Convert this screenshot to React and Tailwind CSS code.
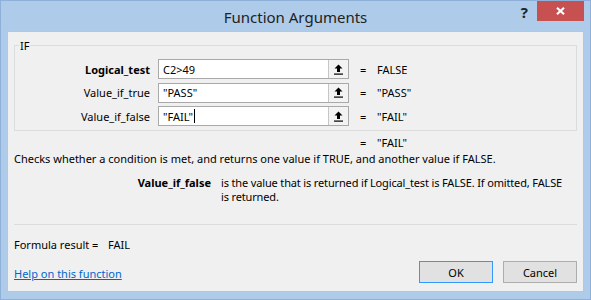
import React from 'react'

const RefButton = () => (
    <div className="w-[20px] h-full border-l border-[#c6c6c6] bg-[#f3f3f3] flex items-center justify-center">
        <svg width="11" height="11" viewBox="0 0 11 11">
            <path d="M5.5 0.5 L9.5 4.5 L7 4.5 L7 8 L4 8 L4 4.5 L1.5 4.5 Z" fill="#000" />
            <rect x="1" y="9.5" width="9" height="1.2" fill="#000" />
        </svg>
    </div>
)

const ArgRow = ({ label, value, result, bold, cursor }) => (
    <div className="flex items-center h-[20px]">
        <div className={`w-[135px] text-right text-black ${bold ? 'font-bold' : ''}`}>{label}</div>
        <div className="ml-[8px] w-[191px] h-[20px] flex border border-[#a9a9a9] bg-white">
            <div className="flex-1 flex items-center pl-[4px] text-black">
                {value}
                {cursor && <span className="inline-block w-[1px] h-[14px] bg-black ml-[1px]"></span>}
            </div>
            <RefButton />
        </div>
        <div className="ml-[11px] w-[17px] text-black">=</div>
        <div className="text-black">{result}</div>
    </div>
)

const App = () => {
    return (
        <div className="w-[591px] h-[300px] bg-[#aecbe9] border border-[#8fb0d8] flex flex-col text-[11px] leading-[15px]" style={{ fontFamily: '"Noto Sans", "Open Sans", sans-serif' }}>
            {/* title bar */}
            <div className="h-[30px] grid grid-cols-[1fr_auto_1fr]">
                <div></div>
                <div className="pt-[6px] text-[15px] leading-[20px] text-[#222]">Function Arguments</div>
                <div className="flex justify-end items-start pr-[6px]">
                    <div className="mt-[3px] mr-[9px] text-[15px] leading-[16px] font-bold text-[#222]">?</div>
                    <div className="w-[47px] h-[20px] bg-[#c75050] flex items-center justify-center">
                        <svg width="9" height="8" viewBox="0 0 9 8">
                            <path d="M1 0.8 L8 7.2 M8 0.8 L1 7.2" stroke="#fff" strokeWidth="2.2" />
                        </svg>
                    </div>
                </div>
            </div>

            {/* panel */}
            <div className="ml-[6px] w-[577px] h-[261px] bg-[#f0f0f0] border border-[#b9c6d6] px-[6px] flex flex-col">
                <div className="mt-[13px] w-[563px] relative border border-[#dcdcdc] pt-[13px] pb-[4px] flex flex-col gap-[3.5px]">
                    <div className="absolute -top-[8px] left-[4px] px-[1px] bg-[#f0f0f0] text-black">IF</div>
                    <ArgRow label="Logical_test" value="C2>49" result="FALSE" bold />
                    <ArgRow label="Value_if_true" value={'"PASS"'} result={'"PASS"'} />
                    <ArgRow label="Value_if_false" value={'"FAIL"'} result={'"FAIL"'} cursor />
                </div>

                <div className="mt-[4px] flex text-black">
                    <div className="ml-[346px] w-[17px]">=</div>
                    <div>"FAIL"</div>
                </div>
                <div className="mt-[1px] text-black">Checks whether a condition is met, and returns one value if TRUE, and another value if FALSE.</div>

                <div className="mt-[10px] flex text-black leading-[14px]">
                    <div className="w-[207px] pr-[10px] text-right font-bold shrink-0">Value_if_false</div>
                    <div className="whitespace-nowrap tracking-[-0.15px]">
                        is the value that is returned if Logical_test is FALSE. If omitted, FALSE<br />is returned.
                    </div>
                </div>

                <div className="mt-[20px] h-[1px] w-[563px] bg-[#dcdcdc]"></div>

                <div className="mt-[12px] flex text-black">
                    <div className="w-[94px] shrink-0">Formula result =</div>
                    <div>FAIL</div>
                </div>

                <div className="mt-[9px] flex items-center">
                    <a href="#" className="flex-1 mt-[2px] text-[#0066cc] underline">Help on this function</a>
                    <button className="w-[74px] h-[22px] bg-[#e1e1e1] border border-[#3399ff] text-black">OK</button>
                    <button className="ml-[10px] w-[74px] h-[22px] bg-[#e1e1e1] border border-[#adadad] text-black">Cancel</button>
                </div>
            </div>
        </div>
    )
}

export default App
